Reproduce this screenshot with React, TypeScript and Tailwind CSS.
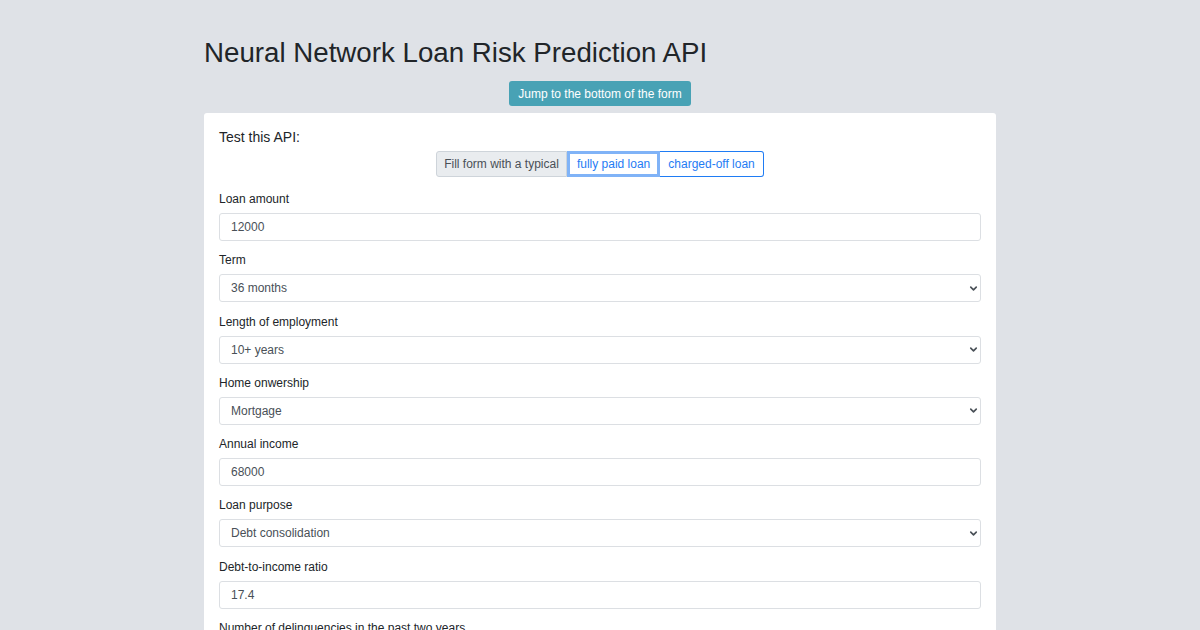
import { ChevronDown } from "lucide-react";

interface FieldProps {
  label: string;
  value: string;
  select?: boolean;
}

const fields: FieldProps[] = [
  { label: "Loan amount", value: "12000" },
  { label: "Term", value: "36 months", select: true },
  { label: "Length of employment", value: "10+ years", select: true },
  { label: "Home onwership", value: "Mortgage", select: true },
  { label: "Annual income", value: "68000" },
  { label: "Loan purpose", value: "Debt consolidation", select: true },
  { label: "Debt-to-income ratio", value: "17.4" },
  { label: "Number of delinquencies in the past two years", value: "0" },
];

function Field({ label, value, select }: FieldProps) {
  return (
    <div className="mb-[11.3px]">
      <label className="block text-[12px] leading-[17px] text-[#212529] mb-[5px]">
        {label}
      </label>
      <div className="flex h-[28px] items-center justify-between rounded-[3px] border border-[#dcdfe3] bg-white pl-[11px] pr-[1px] text-[12px] text-[#495057]">
        <span>{value}</span>
        {select && <ChevronDown size={11} strokeWidth={3.5} className="text-[#495057]" />}
      </div>
    </div>
  );
}

export default function App() {
  return (
    <div
      className="h-[630px] overflow-hidden bg-[#dfe2e7] pt-[35px]"
      style={{ fontFamily: '"Liberation Sans", Arial, sans-serif' }}
    >
      <div className="mx-auto w-[792px]">
        <h1 className="text-[27.7px] leading-[36px] font-normal text-[#212529]">
          Neural Network Loan Risk Prediction API
        </h1>
        <div className="mt-[10px] flex justify-center">
          <button className="h-[25px] rounded-[3px] bg-[#48a2b5] px-[9px] text-[12px] text-white">
            Jump to the bottom of the form
          </button>
        </div>
        <div className="mt-[7px] rounded-[3px] bg-white px-[15px] pt-[15px]">
          <h2 className="text-[14px] leading-[18px] font-medium text-[#212529]">
            Test this API:
          </h2>
          <div className="mt-[5px] mb-[14px] flex justify-center">
            <div className="flex h-[26px] text-[12px]">
              <span className="flex items-center rounded-l-[3px] border border-[#ced4da] bg-[#e9ecef] px-[7px] text-[#495057]">
                Fill form with a typical
              </span>
              <button className="relative flex items-center border-[3px] border-[#80b3f7] bg-white px-[7px] text-[#1f7cf4]">
                fully paid loan
              </button>
              <button className="flex items-center rounded-r-[3px] border border-[#1f7cf4] border-l-0 bg-white px-[8px] text-[#1f7cf4]">
                charged-off loan
              </button>
            </div>
          </div>
          {fields.map((f) => (
            <Field key={f.label} {...f} />
          ))}
        </div>
      </div>
    </div>
  );
}
